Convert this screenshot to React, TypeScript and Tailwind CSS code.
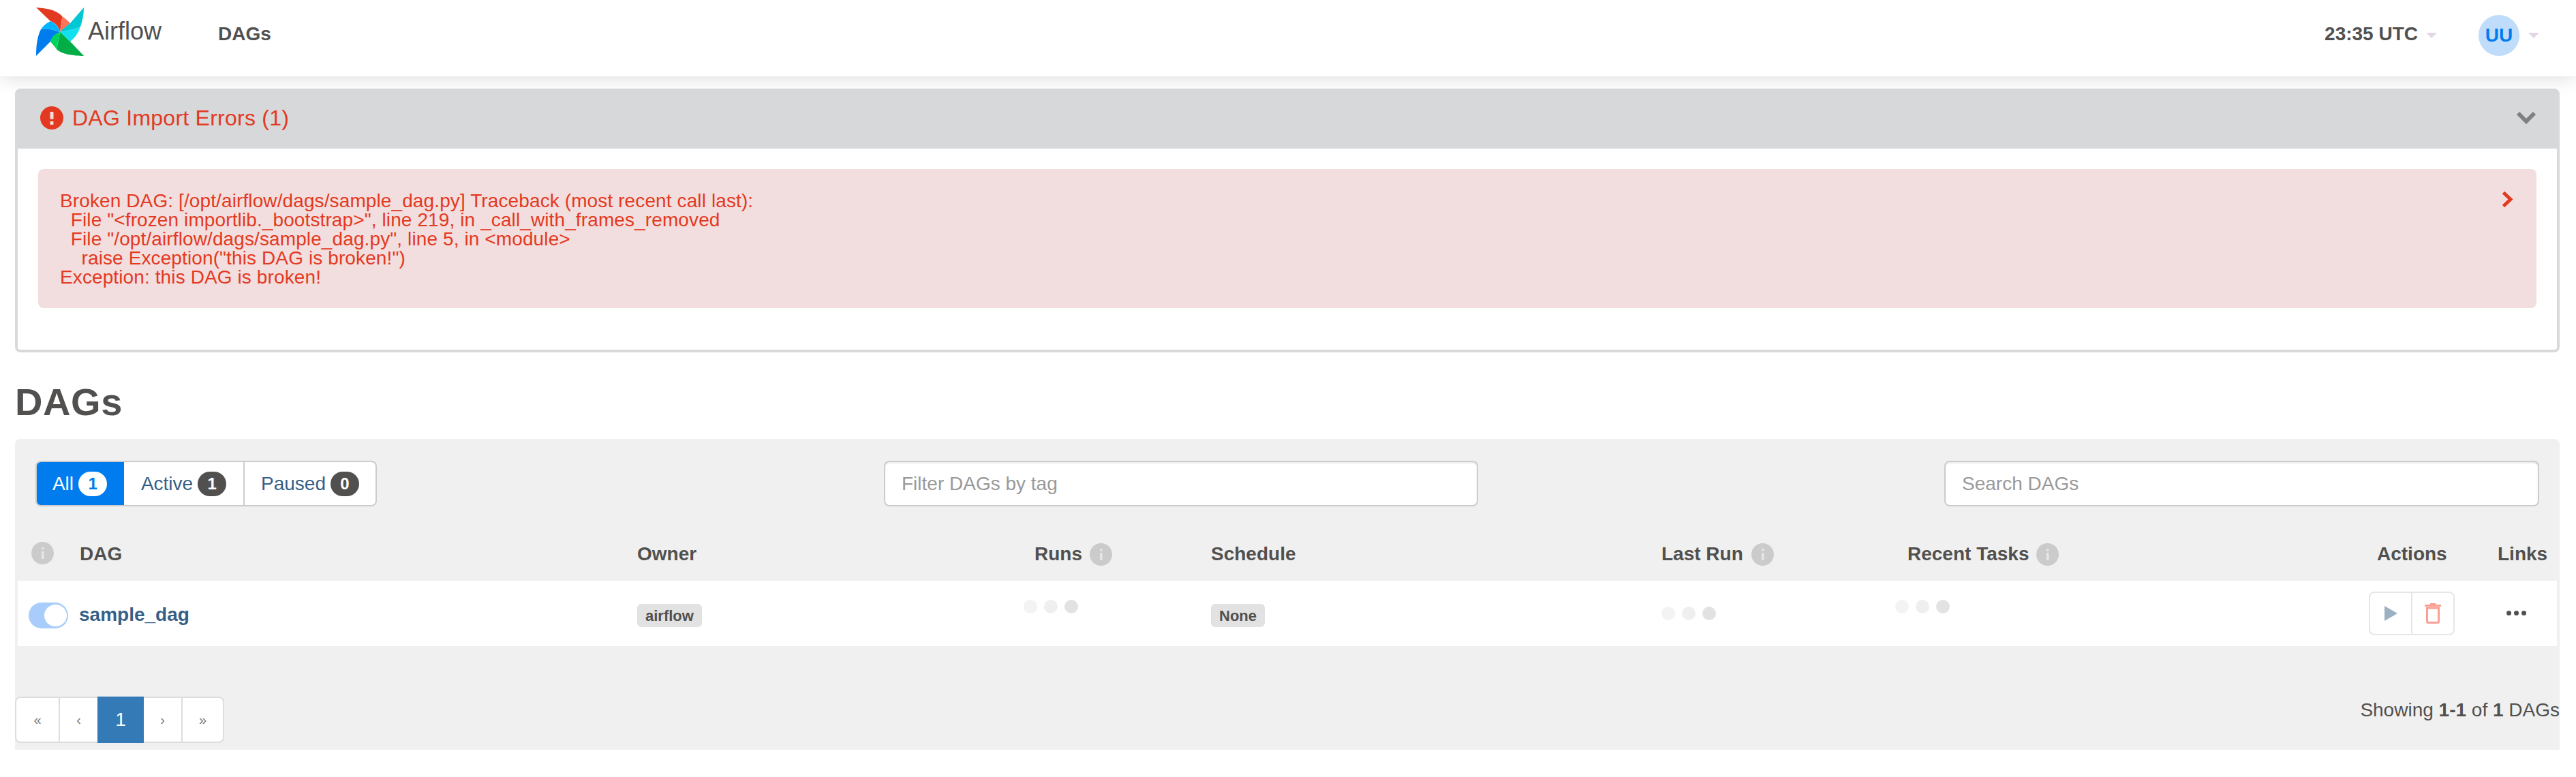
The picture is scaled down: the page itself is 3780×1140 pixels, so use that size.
const traceback = `Broken DAG: [/opt/airflow/dags/sample_dag.py] Traceback (most recent call last):
  File "<frozen importlib._bootstrap>", line 219, in _call_with_frames_removed
  File "/opt/airflow/dags/sample_dag.py", line 5, in <module>
    raise Exception("this DAG is broken!")
Exception: this DAG is broken!`;

const columns =
  "grid grid-cols-[91px_818px_567px_275px_661px_343px_695px_189px_87px]";

const Logo = () => (
  <svg width="70" height="71" viewBox="0 0 70 71" className="shrink-0">
    <path d="M0 0C12 1 28 2 38.5 13L35 36C33 28 29 23 21 20Z" fill="#e43921" />
    <path d="M38.5 13C43 16 47 20 50 23L35 36Z" fill="#ff7557" />
    <path d="M70 0L50 23C44 28 38 32 35 36C45 34 58 32 65 28C68 20 70 10 70 0Z" fill="#00c7d4" />
    <path d="M35 36C45 34 58 32 65 28C62 38 56 45 50 50C45 46 40 40 35 36Z" fill="#11e1ee" />
    <path d="M35 36C34 44 32 52 30 61C36 68 54 71 70 71L50 50C45 46 40 40 35 36Z" fill="#00ad46" />
    <path d="M35 36C28 36 22 40 21 50L30 61C32 52 34 44 35 36Z" fill="#00d65f" />
    <path d="M0 71L21 50C22 44 28 38 35 36C24 32 14 30 7 32C2 42 0 55 0 71Z" fill="#017cee" />
    <path d="M21 20C28 23 33 28 35 36C24 32 14 30 7 32C10 27 15 23 21 20Z" fill="#00b4ff" />
  </svg>
);

const Caret = () => (
  <span className="w-0 h-0 border-x-[8px] border-x-transparent border-t-[8px] border-t-[#e2d7e6]" />
);

const Info = () => (
  <svg width="33" height="33" viewBox="0 0 33 33" className="shrink-0">
    <circle cx="16.5" cy="16.5" r="16.5" fill="#cbcbcb" />
    <rect x="15" y="14" width="3.5" height="11" fill="#e6e6e6" />
    <rect x="15" y="8" width="3.5" height="3.5" fill="#e6e6e6" />
  </svg>
);

const Dots = ({ className }: { className: string }) => (
  <div className={`flex gap-[10px] ${className}`}>
    <span className="size-5 rounded-full bg-[#f3f3f3]" />
    <span className="size-5 rounded-full bg-[#efefef]" />
    <span className="size-5 rounded-full bg-[#e2e2e2]" />
  </div>
);

const Tag = ({ children }: { children: string }) => (
  <span className="flex h-[34px] items-center rounded-[6px] bg-[#e2e2e2] px-[12px] text-[22px] font-bold text-[#51504f]">
    {children}
  </span>
);

const Filter = ({ label, count, active, className }: { label: string; count: number; active?: boolean; className: string }) => (
  <button
    className={`flex h-full items-center justify-center gap-[7px] ${active ? "bg-[#017cee] text-white" : "text-[#365f87]"} ${className}`}
  >
    {label}
    <span
      className={`flex h-9 w-[42px] items-center justify-center rounded-[18px] text-[24px] font-bold ${active ? "bg-white text-[#017cee]" : "bg-[#51504f] text-white"}`}
    >
      {count}
    </span>
  </button>
);

const Pager = ({ label, active, className }: { label: string; active?: boolean; className: string }) => (
  <span
    className={`flex items-center justify-center ${active ? "h-[68px] -my-[2px] bg-[#337ab7] text-white" : "text-[20px] text-[#777777]"} ${className}`}
  >
    {label}
  </span>
);

export default function App() {
  return (
    <div className="h-[1140px] w-[3780px] overflow-hidden bg-white font-['Liberation_Sans',Arial,sans-serif] text-[28px] text-[#51504f]">
      <header className="relative flex h-[112px] items-center bg-white pb-5 pl-[53px] pr-[54px] shadow-[0_4px_24px_rgba(0,0,0,0.12)]">
        <Logo />
        <span className="ml-[6px] text-[36px] leading-none">Airflow</span>
        <span className="ml-[83px] mt-2 font-bold">DAGs</span>
        <span className="ml-auto mt-2 font-bold">23:35 UTC</span>
        <span className="ml-3 mt-3 flex">
          <Caret />
        </span>
        <span className="ml-[61px] mt-3 flex size-[60px] items-center justify-center rounded-full bg-[#bfdcfb] font-bold text-[#017cee]">
          UU
        </span>
        <span className="ml-[13px] mt-3 flex">
          <Caret />
        </span>
      </header>

      <main className="pl-[22px] pr-[24px]">
        <section className="mt-[18px] h-[387px] rounded-[8px] border-[4px] border-[#d8d9da]">
          <div className="flex h-[84px] items-center bg-[#d6d8d9] pb-[6px] pl-[33px] pr-[30px] text-[32px] tracking-[0.25px] text-[#e43921]">
            <svg width="34" height="34" viewBox="0 0 34 34">
              <circle cx="17" cy="17" r="17" fill="#e43921" />
              <rect x="14.5" y="8" width="5" height="11" rx="1" fill="#f5dcd8" />
              <rect x="14.5" y="22" width="5" height="5" rx="1" fill="#f5dcd8" />
            </svg>
            <span className="ml-[13px]">DAG Import Errors (1)</span>
            <svg width="30" height="20" viewBox="0 0 30 20" className="ml-auto">
              <path d="M3 3L15 15L27 3" fill="none" stroke="#808080" strokeWidth="6" />
            </svg>
          </div>
          <div className="relative mx-[30px] mt-[30px] h-[204px] rounded-[8px] bg-[#f2dede] pl-8 pt-[33px] text-[#e43921]">
            <pre className="font-['Liberation_Sans',Arial,sans-serif] text-[28px] leading-[28px] tracking-[0.11px]">{traceback}</pre>
            <svg width="17" height="25" viewBox="0 0 17 25" className="absolute right-[34px] top-[32px]">
              <path d="M2.5 2.5L13 12.5L2.5 22.5" fill="none" stroke="#e43921" strokeWidth="5" />
            </svg>
          </div>
        </section>

        <h1 className="h-[127px] pt-[45px] text-[56px] font-bold leading-[56px] tracking-[0.6px]">DAGs</h1>

        <section className="h-[456px] rounded-t-[8px] bg-[#f0f0f0] pt-8">
          <div className="flex h-[67px] items-stretch pl-[30px]">
            <div className="flex w-[501px] overflow-hidden rounded-[8px] border-2 border-[#cccccc] bg-white">
              <Filter label="All" count={1} active className="w-[130px] -ml-[2px]" />
              <Filter label="Active" count={1} className="w-[177px] border-r-2 border-[#cccccc]" />
              <Filter label="Paused" count={0} className="flex-1" />
            </div>
            <input
              placeholder="Filter DAGs by tag"
              className="ml-[744px] w-[872px] rounded-[8px] border-2 border-[#cccccc] bg-white px-[24px] shadow-[inset_0_2px_2px_rgba(0,0,0,0.075)] placeholder:text-[#999999]"
            />
            <input
              placeholder="Search DAGs"
              className="ml-[684px] w-[873px] rounded-[8px] border-2 border-[#cccccc] bg-white px-[24px] shadow-[inset_0_2px_2px_rgba(0,0,0,0.075)] placeholder:text-[#999999]"
            />
          </div>

          <div className="mx-1">
            <div className={`${columns} h-[109px] items-end pb-[18px] font-bold`}>
              <div className="pb-[6px] pl-[20px]">
                <Info />
              </div>
              <div>DAG</div>
              <div>Owner</div>
              <div className="flex items-center gap-[11px] pl-4">
                Runs
                <Info />
              </div>
              <div>Schedule</div>
              <div className="flex items-center gap-3">
                Last Run
                <Info />
              </div>
              <div className="flex items-center gap-[11px] pl-[18px]">
                Recent Tasks
                <Info />
              </div>
              <div className="pl-3">Actions</div>
              <div>Links</div>
            </div>

            <div className={`${columns} h-[96px] items-start bg-white`}>
              <div className="pl-4 pt-8">
                <span className="flex h-[38px] w-[58px] items-center justify-end rounded-[19px] bg-[#a8cdfb] pr-[2px]">
                  <span className="h-8 w-[33px] rounded-full bg-white" />
                </span>
              </div>
              <a className="-ml-px pt-[33px] font-bold leading-[34px] text-[#365f87]">sample_dag</a>
              <div className="flex pt-[34px]">
                <Tag>airflow</Tag>
              </div>
              <Dots className="pt-[28px]" />
              <div className="flex pt-[34px]">
                <Tag>None</Tag>
              </div>
              <Dots className="pt-[38px]" />
              <Dots className="pt-[28px]" />
              <div className="pt-4">
                <div className="flex h-16 w-[126px] rounded-[8px] border-2 border-[#e6e6e6]">
                  <span className="flex flex-1 items-center justify-center border-r-2 border-[#e6e6e6]">
                    <svg width="19" height="22" viewBox="0 0 19 22">
                      <path d="M0 0L19 11L0 22Z" fill="#9cb0c3" />
                    </svg>
                  </span>
                  <span className="flex flex-1 items-center justify-center">
                    <svg width="24" height="30" viewBox="0 0 24 30">
                      <path d="M8 1.5H16M0 3.5H24" stroke="#f99f93" strokeWidth="3" />
                      <path d="M3.5 7V27C3.5 28 4 28.5 5 28.5H19C20 28.5 20.5 28 20.5 27V7Z" fill="none" stroke="#f99f93" strokeWidth="3" />
                    </svg>
                  </span>
                </div>
              </div>
              <div className="flex gap-[4px] pl-[13px] pt-[44px]">
                <span className="size-[7px] rounded-full bg-[#51504f]" />
                <span className="size-[7px] rounded-full bg-[#51504f]" />
                <span className="size-[7px] rounded-full bg-[#51504f]" />
              </div>
            </div>
          </div>

          <div className="mt-[74px] flex items-start justify-between">
            <nav className="flex h-[68px] w-[307px] items-stretch rounded-[8px] border-2 border-[#dddddd] bg-white text-[#777777]">
              <Pager label="«" className="w-[64px] border-r-2 border-[#dddddd]" />
              <Pager label="‹" className="w-[55px]" />
              <Pager label="1" active className="w-[68px]" />
              <Pager label="›" className="w-[57px] border-r-2 border-[#dddddd]" />
              <Pager label="»" className="flex-1" />
            </nav>
            <p className="mt-[4px] leading-8">
              Showing <b>1-1</b> of <b>1</b> DAGs
            </p>
          </div>
        </section>
      </main>
    </div>
  );
}
